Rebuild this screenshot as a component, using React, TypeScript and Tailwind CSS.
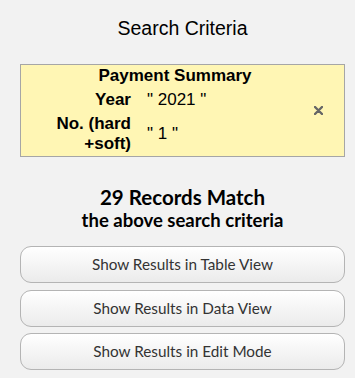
const buttons = [
  'Show Results in Table View',
  'Show Results in Data View',
  'Show Results in Edit Mode',
]

export default function App() {
  return (
    <div className="min-h-[378px] w-[355px] bg-[#f2f2f2] pl-[20px] pr-[10px] pt-[16px]">
      <h2 className="text-center font-['Liberation_Sans',Arial,sans-serif] text-[19.5px] leading-[24px] text-black">
        Search Criteria
      </h2>

      <div className="mt-[24px] grid h-[93px] grid-cols-[1fr_52px] border border-[#a6a6a6] bg-[#fff6b4] font-['Liberation_Sans',Arial,sans-serif] text-[17px] text-black">
        <div>
          <div className="pl-[37px] text-center font-bold leading-[22px]">Payment Summary</div>
          <div className="grid grid-cols-[110px_1fr] items-center gap-x-[16px]">
            <div className="text-right font-bold leading-[26px]">Year</div>
            <div className="leading-[26px]">" 2021 "</div>
            <div className="mt-[1px] text-right font-bold leading-[20px]">
              No. (hard
              <br />
              +soft)
            </div>
            <div className="mt-[1px] leading-[20px]">" 1 "</div>
          </div>
        </div>
        <div className="flex items-center justify-center pb-[1px] pl-[1px]">
          <svg width="9" height="9" viewBox="0 0 9 9" className="text-[#666]">
            <path d="M1 1L8 8M8 1L1 8" stroke="currentColor" strokeWidth="2.4" strokeLinecap="round" />
          </svg>
        </div>
      </div>

      <div className="mt-[28px] text-center font-['Lato',sans-serif] font-bold text-black">
        <div className="text-[20.5px] leading-[24px]">29 Records Match</div>
        <div className="text-[18.5px] leading-[22px]">the above search criteria</div>
      </div>

      <div className="mt-[15px] flex flex-col gap-[6.5px]">
        {buttons.map((b) => (
          <button
            key={b}
            className="h-[37px] rounded-[11px] border border-[#b4b4b4] bg-gradient-to-b from-white to-[#ebebeb] text-center font-['Lato',sans-serif] text-[15.3px] text-[#333]"
          >
            {b}
          </button>
        ))}
      </div>
    </div>
  )
}
